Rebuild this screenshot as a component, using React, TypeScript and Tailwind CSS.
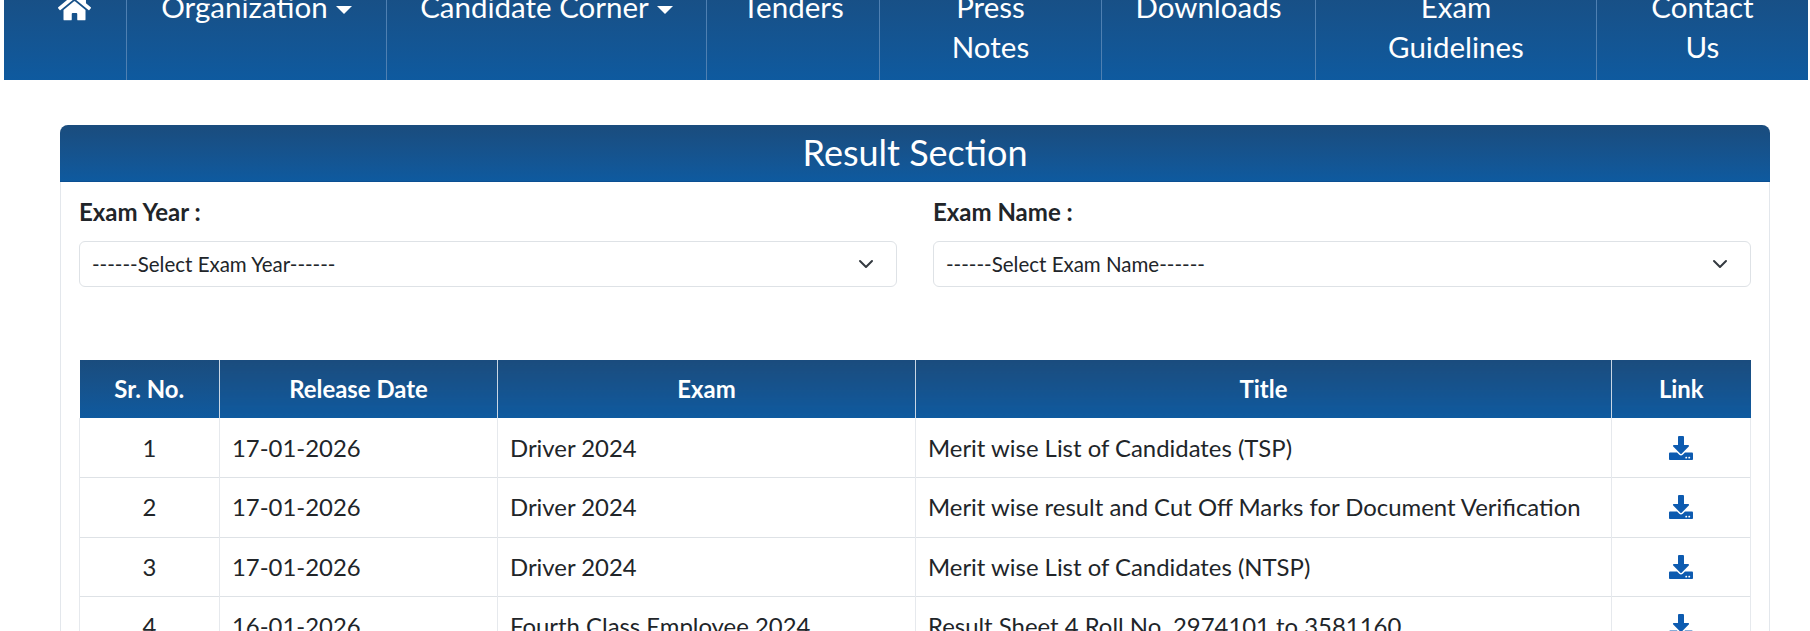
import { FaDownload, FaHome } from 'react-icons/fa';

const rows = [
  { sr: 1, date: '17-01-2026', exam: 'Driver 2024', title: 'Merit wise List of Candidates (TSP)' },
  { sr: 2, date: '17-01-2026', exam: 'Driver 2024', title: 'Merit wise result and Cut Off Marks for Document Verification' },
  { sr: 3, date: '17-01-2026', exam: 'Driver 2024', title: 'Merit wise List of Candidates (NTSP)' },
  { sr: 4, date: '16-01-2026', exam: 'Fourth Class Employee 2024', title: 'Result Sheet 4 Roll No. 2974101 to 3581160' },
];

const gradient = 'bg-gradient-to-b from-[#1a4c7d] to-[#0e5a9f]';

function Caret() {
  return <span className="ml-[8px] inline-block align-[4px] border-x-[8px] border-t-[8px] border-x-transparent border-t-white" />;
}

function NavItem({ width, first, children }: { width: string; first?: boolean; children: React.ReactNode }) {
  return (
    <li className={`${width} flex justify-center pt-[18px] text-center ${first ? 'pl-[18px]' : 'border-l border-l-[#4f80b2]'}`}>
      <span>{children}</span>
    </li>
  );
}

function SelectBox({ label, placeholder }: { label: string; placeholder: string }) {
  return (
    <div className="flex-1">
      <label className="block text-[24px] leading-[24px] font-bold text-[#212529]">{label}</label>
      <div className="relative mt-[17px]">
        <select className="h-[46px] w-full appearance-none rounded-[6px] border border-[#dee2e6] bg-white pl-[12px] text-[20.5px] text-[#212529]">
          <option>{placeholder}</option>
        </select>
        <svg className="pointer-events-none absolute right-[23px] top-[15px] h-[16px] w-[16px]" viewBox="0 0 16 16" fill="none" stroke="#343a40" strokeWidth="2" strokeLinecap="round" strokeLinejoin="round">
          <path d="m2 5 6 6 6-6" />
        </svg>
      </div>
    </div>
  );
}

export default function App() {
  return (
    <div className="h-[631px] w-[1810px] overflow-hidden bg-white font-['Lato',sans-serif] text-[#212529]">
      <nav className={`-mt-[31px] ml-[4px] h-[111px] w-[1804px] text-[29.5px] leading-[40px] text-white ${gradient}`}>
        <ul className="flex h-full">
          <NavItem width="w-[122px]" first>
            <FaHome className="mx-auto mt-[4px] h-[33px] w-[33px]" />
          </NavItem>
          <NavItem width="w-[260px]">Organization<Caret /></NavItem>
          <NavItem width="w-[320px]">Candidate Corner<Caret /></NavItem>
          <NavItem width="w-[173px]">Tenders</NavItem>
          <NavItem width="w-[222px]">Press<br />Notes</NavItem>
          <NavItem width="w-[214px]">Downloads</NavItem>
          <NavItem width="w-[281px]">Exam<br />Guidelines</NavItem>
          <NavItem width="w-[212px]">Contact<br />Us</NavItem>
        </ul>
      </nav>

      <section className="mx-[60px] mt-[45px] w-[1710px] rounded-t-[8px] border border-[#e3e7ec]">
        <h2 className={`-m-px h-[57px] rounded-t-[8px] border-b border-b-[#0b4f92] text-center text-[36px] leading-[55px] text-white ${gradient}`}>
          Result Section
        </h2>
        <div className="pl-[18px] pr-[18px] pt-[19px]">
          <div className="flex gap-[36px]">
            <SelectBox label="Exam Year :" placeholder="------Select Exam Year------" />
            <SelectBox label="Exam Name :" placeholder="------Select Exam Name------" />
          </div>
          <table className="mt-[73px] w-full table-fixed border-collapse text-[23.9px]">
            <colgroup>
              <col className="w-[140px]" />
              <col className="w-[278px]" />
              <col className="w-[418px]" />
              <col className="w-[696px]" />
              <col className="w-[139px]" />
            </colgroup>
            <thead>
              <tr className="h-[58px] text-white">
                {['Sr. No.', 'Release Date', 'Exam', 'Title', 'Link'].map(h => (
                  <th key={h} className={`border-x border-x-[#c9d6e4] text-center font-bold first:border-l-0 last:border-r-0 ${gradient}`}>{h}</th>
                ))}
              </tr>
            </thead>
            <tbody>
              {rows.map(r => (
                <tr key={r.sr} className="h-[59.5px] border-b border-[#dee2e6]">
                  <td className="border-x border-[#e6e9ed] text-center">{r.sr}</td>
                  <td className="border-x border-[#e6e9ed] px-[12px]">{r.date}</td>
                  <td className="border-x border-[#e6e9ed] px-[12px]">{r.exam}</td>
                  <td className="border-x border-[#e6e9ed] px-[12px]">{r.title}</td>
                  <td className="border-x border-[#e6e9ed] text-center">
                    <FaDownload className="mx-auto h-[24px] w-[24px] text-[#0d5bb0]" />
                  </td>
                </tr>
              ))}
            </tbody>
          </table>
        </div>
      </section>
    </div>
  );
}
